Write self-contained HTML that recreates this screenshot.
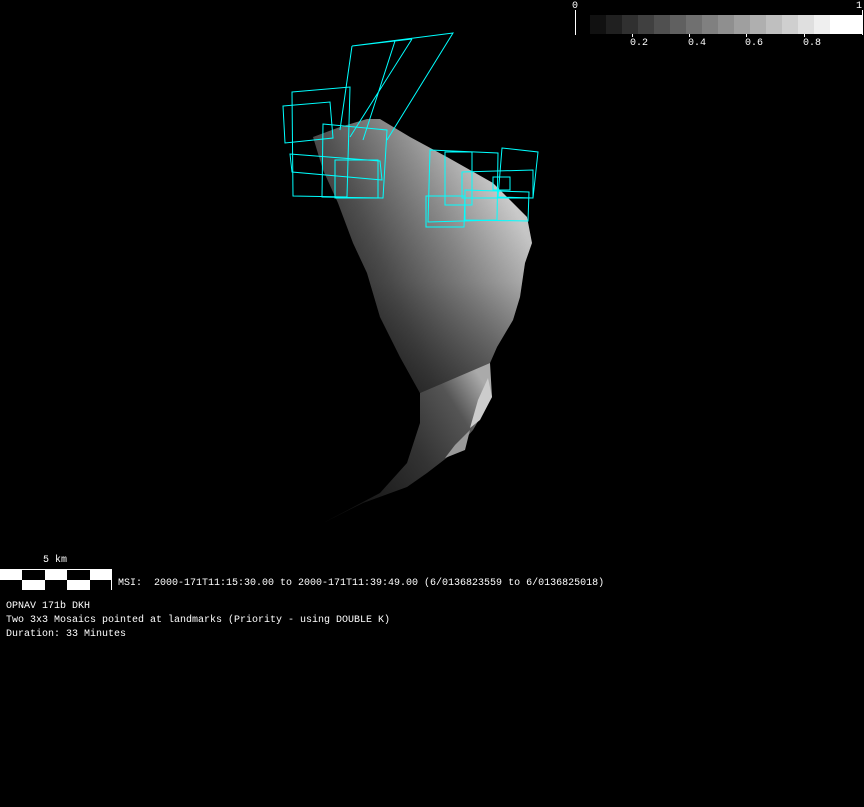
<!DOCTYPE html>
<html><head><meta charset="utf-8"><style>
html,body{margin:0;padding:0;background:#000;width:864px;height:807px;overflow:hidden;position:relative}
.t{position:absolute;font-family:"Liberation Mono",monospace;font-size:10px;color:#fff;white-space:pre;line-height:10px}
</style></head><body>
<svg width="864" height="807" style="position:absolute;left:0;top:0">
<defs>
<linearGradient id="g" x1="330" y1="300" x2="520" y2="220" gradientUnits="userSpaceOnUse">
<stop offset="0" stop-color="#2a2a2a"/><stop offset="0.3" stop-color="#555"/><stop offset="0.65" stop-color="#959595"/><stop offset="1" stop-color="#dcdcdc"/></linearGradient>
<linearGradient id="gv" x1="0" y1="120" x2="0" y2="390" gradientUnits="userSpaceOnUse">
<stop offset="0" stop-color="#000" stop-opacity="0"/><stop offset="0.6" stop-color="#000" stop-opacity="0.15"/><stop offset="1" stop-color="#000" stop-opacity="0.45"/></linearGradient>
<linearGradient id="g2" x1="340" y1="500" x2="495" y2="400" gradientUnits="userSpaceOnUse">
<stop offset="0" stop-color="#111"/><stop offset="0.5" stop-color="#333"/><stop offset="0.8" stop-color="#555"/><stop offset="1" stop-color="#aaa"/></linearGradient>
</defs>
<path d="M367,119 L380,119 L410,137 L447,157 L493,183 L527,217 L532,243 L525,263 L520,297 L513,320 L497,347 L490,363 L420,393 L400,357 L380,317 L367,273 L353,243 L338,203 L323,170 L313,137 L340,127 Z" fill="url(#g)"/>
<path d="M367,119 L380,119 L410,137 L447,157 L493,183 L527,217 L532,243 L525,263 L520,297 L513,320 L497,347 L490,363 L420,393 L400,357 L380,317 L367,273 L353,243 L338,203 L323,170 L313,137 L340,127 Z" fill="url(#gv)"/>
<path d="M490,363 L492,397 L473,430 L453,453 L427,473 L407,487 L363,503 L323,523 L380,493 L407,463 L420,423 L420,393 Z" fill="url(#g2)"/>
<path d="M488,378 L492,397 L480,420 L470,428 L478,400 Z" fill="#ccc"/>
<path d="M455,445 L470,430 L465,450 L445,458 Z" fill="#999"/>
<g fill="none" stroke="#0ff" stroke-width="1">
<path d="M352,46 L453,33 L387,140 M395,41 L363,140 M412,39 L350,137 M352,46 L340,130 M352,46 L412,39"/>
<path d="M292,92 L350,87 L347,197 L293,196 Z"/>
<path d="M283,106 L330,102 L333,138 L285,143 Z"/>
<path d="M323,124 L387,130 L383,198 L322,197 Z"/>
<path d="M290,154 L380,161 L382,180 L292,172 Z"/>
<path d="M335,160 L378,160 L378,198 L335,198 Z"/>
<path d="M430,150 L498,153 L497,220 L428,222 Z"/>
<path d="M502,148 L538,152 L533,198 L498,197 Z"/>
<path d="M426,196 L465,196 L464,227 L426,227 Z"/>
<path d="M465,190 L529,192 L528,221 L465,220 Z"/>
<path d="M462,172 L533,170 L533,198 L462,198 Z"/>
<path d="M445,152 L472,152 L472,205 L445,205 Z"/>
<path d="M493,177 L510,177 L510,190 L493,190 Z"/>
</g>
<line x1="575.5" y1="10" x2="575.5" y2="35" stroke="#fff"/>
<g>
<rect x="590" y="15" width="16" height="19" fill="#111"/>
<rect x="606" y="15" width="16" height="19" fill="#202020"/>
<rect x="622" y="15" width="16" height="19" fill="#303030"/>
<rect x="638" y="15" width="16" height="19" fill="#404040"/>
<rect x="654" y="15" width="16" height="19" fill="#505050"/>
<rect x="670" y="15" width="16" height="19" fill="#606060"/>
<rect x="686" y="15" width="16" height="19" fill="#707070"/>
<rect x="702" y="15" width="16" height="19" fill="#808080"/>
<rect x="718" y="15" width="16" height="19" fill="#8f8f8f"/>
<rect x="734" y="15" width="16" height="19" fill="#9f9f9f"/>
<rect x="750" y="15" width="16" height="19" fill="#afafaf"/>
<rect x="766" y="15" width="16" height="19" fill="#bfbfbf"/>
<rect x="782" y="15" width="16" height="19" fill="#cfcfcf"/>
<rect x="798" y="15" width="16" height="19" fill="#dfdfdf"/>
<rect x="814" y="15" width="16" height="19" fill="#efefef"/>
<rect x="830" y="15" width="32" height="19" fill="#fff"/>
</g>
<g stroke="#fff"><line x1="632.5" y1="34" x2="632.5" y2="37"/><line x1="689.5" y1="34" x2="689.5" y2="37"/><line x1="746.5" y1="34" x2="746.5" y2="37"/><line x1="804.5" y1="34" x2="804.5" y2="37"/><line x1="862.5" y1="10" x2="862.5" y2="35"/></g>
<rect x="0" y="569" width="112" height="21" fill="#fff"/>
<rect x="22" y="570" width="23" height="10" fill="#000"/>
<rect x="67" y="570" width="23" height="10" fill="#000"/>
<rect x="0" y="580" width="22" height="10" fill="#000"/>
<rect x="45" y="580" width="22" height="10" fill="#000"/>
<rect x="90" y="580" width="21" height="10" fill="#000"/>
</svg>
<div class="t" style="left:572px;top:2px">0</div>
<div class="t" style="left:856px;top:2px">1</div>
<div class="t" style="left:630px;top:39px">0.2</div>
<div class="t" style="left:688px;top:39px">0.4</div>
<div class="t" style="left:745px;top:39px">0.6</div>
<div class="t" style="left:803px;top:39px">0.8</div>
<div class="t" style="left:43px;top:556px">5 km</div>
<div class="t" style="left:118px;top:579px">MSI:  2000-171T11:15:30.00 to 2000-171T11:39:49.00 (6/0136823559 to 6/0136825018)</div>
<div class="t" style="left:6px;top:602px">OPNAV 171b DKH</div>
<div class="t" style="left:6px;top:616px">Two 3x3 Mosaics pointed at landmarks (Priority - using DOUBLE K)</div>
<div class="t" style="left:6px;top:630px">Duration: 33 Minutes</div>
</body></html>
